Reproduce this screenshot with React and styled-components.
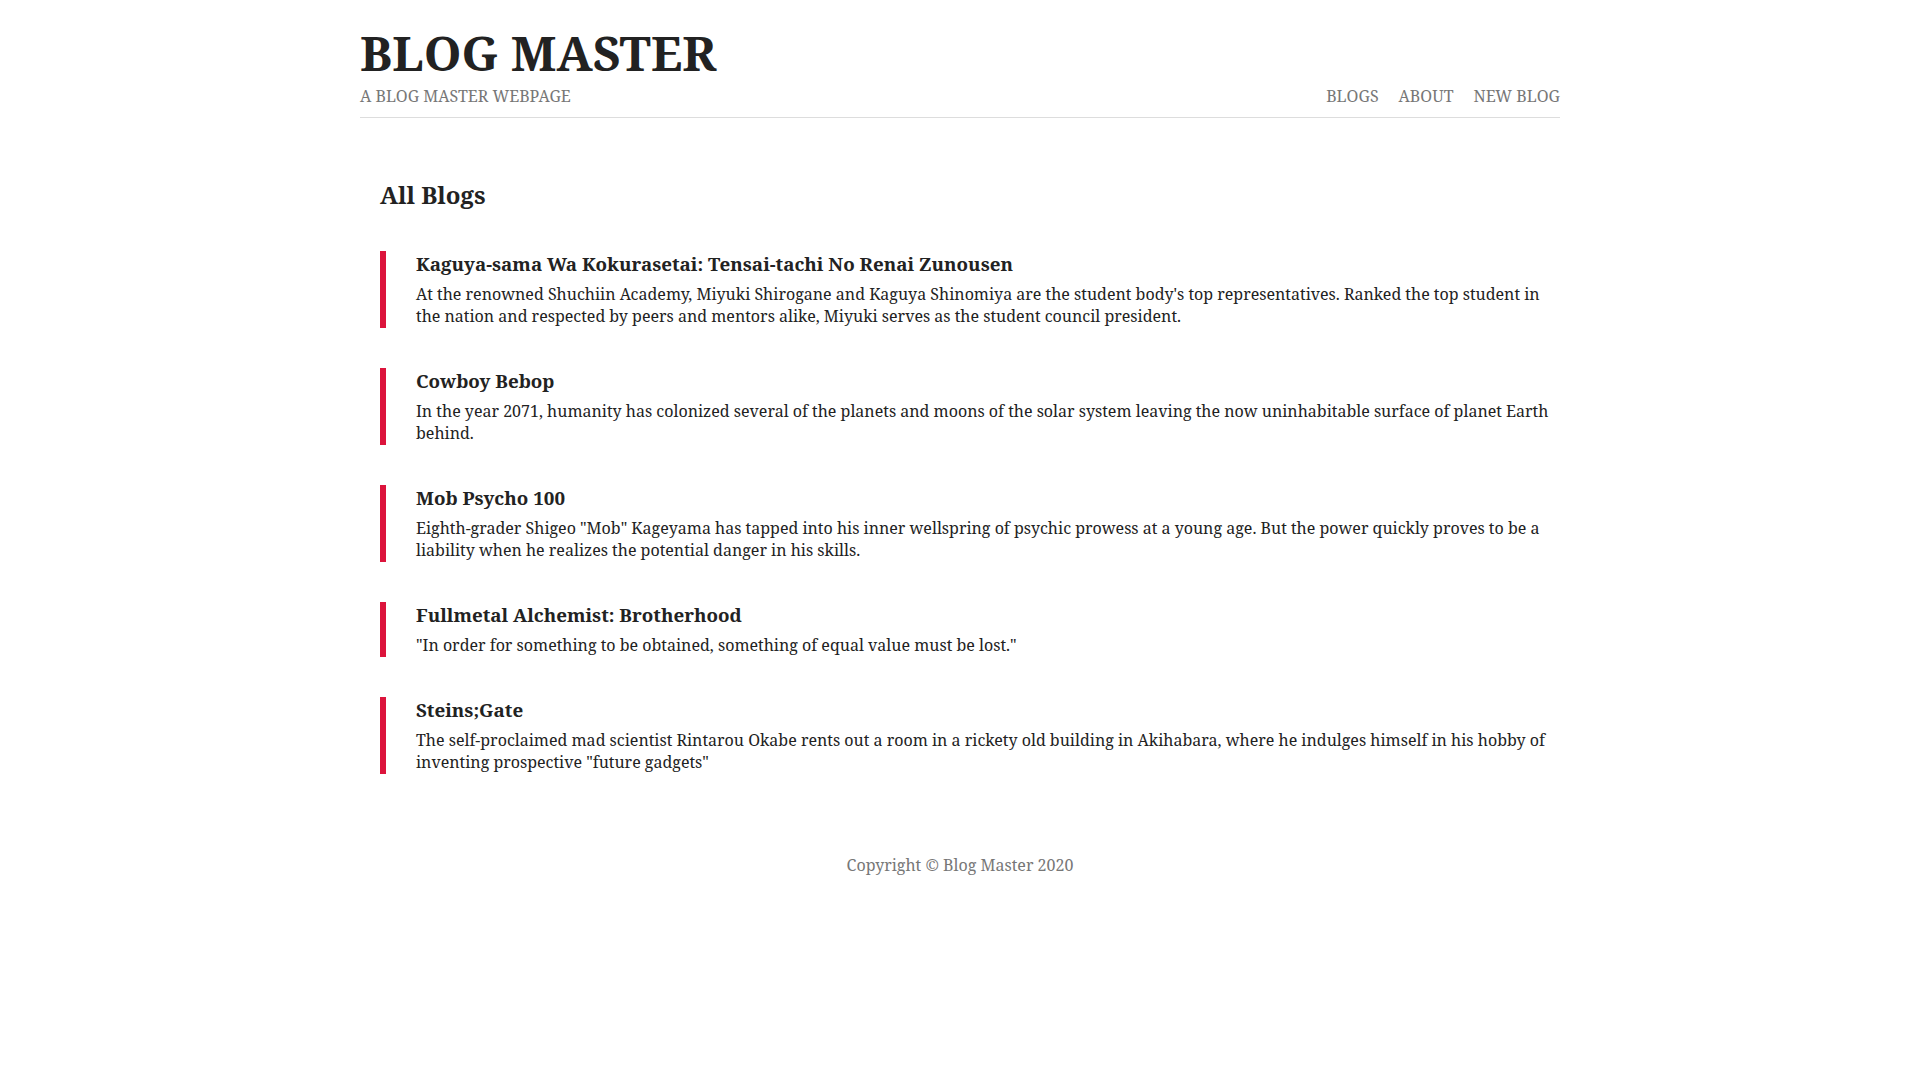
import styled, { createGlobalStyle } from "styled-components";

const GlobalStyle = createGlobalStyle`
  html, body {
    margin: 0;
    padding: 0;
    background: #fff;
  }
  body {
    font-family: "Noto Serif", "DejaVu Serif", "Liberation Serif", serif;
    color: #222;
  }
`;

const blogs = [
  {
    title: "Kaguya-sama Wa Kokurasetai: Tensai-tachi No Renai Zunousen",
    body: "At the renowned Shuchiin Academy, Miyuki Shirogane and Kaguya Shinomiya are the student body's top representatives. Ranked the top student in the nation and respected by peers and mentors alike, Miyuki serves as the student council president.",
  },
  {
    title: "Cowboy Bebop",
    body: "In the year 2071, humanity has colonized several of the planets and moons of the solar system leaving the now uninhabitable surface of planet Earth behind.",
  },
  {
    title: "Mob Psycho 100",
    body: 'Eighth-grader Shigeo "Mob" Kageyama has tapped into his inner wellspring of psychic prowess at a young age. But the power quickly proves to be a liability when he realizes the potential danger in his skills.',
  },
  {
    title: "Fullmetal Alchemist: Brotherhood",
    body: '"In order for something to be obtained, something of equal value must be lost."',
  },
  {
    title: "Steins;Gate",
    body: 'The self-proclaimed mad scientist Rintarou Okabe rents out a room in a rickety old building in Akihabara, where he indulges himself in his hobby of inventing prospective "future gadgets"',
  },
];

const Page = styled.div`
  width: 1200px;
  margin: 0 auto;
`;

const Header = styled.header`
  display: flex;
  justify-content: space-between;
  align-items: flex-end;
  padding-top: 24px;
  padding-bottom: 10px;
  border-bottom: 1px solid #ddd;
`;

const Brand = styled.div`
  display: flex;
  flex-direction: column;
  gap: 3px;
`;

const Title = styled.h1`
  margin: 0;
  font-size: 48px;
  line-height: 1.2;
  font-weight: 700;
  color: #222;
`;

const Tagline = styled.div`
  font-size: 16px;
  line-height: 1.4;
  color: #777;
  text-transform: uppercase;
`;

const Nav = styled.nav`
  display: flex;
  gap: 20px;
`;

const NavLink = styled.a`
  font-size: 16px;
  line-height: 1.4;
  color: #777;
  text-decoration: none;
  text-transform: uppercase;
  cursor: pointer;
`;

const Main = styled.main`
  padding: 60px 0 0 20px;
`;

const Heading = styled.h2`
  margin: 0 0 39px;
  font-size: 24px;
  line-height: 1.4;
  font-weight: 700;
`;

const List = styled.div`
  display: flex;
  flex-direction: column;
  gap: 40px;
`;

const Post = styled.article`
  border-left: 6px solid #dc143c;
  padding-left: 30px;
`;

const PostTitle = styled.h3`
  margin: 0 0 6px;
  font-size: 18.8px;
  line-height: 1.4;
  font-weight: 700;
`;

const PostBody = styled.p`
  margin: 0;
  font-size: 16px;
  line-height: 1.4;
`;

const Footer = styled.footer`
  padding: 80px 0 40px;
  text-align: center;
  font-size: 16px;
  line-height: 1.4;
  color: #777;
`;

export default function App() {
  return (
    <>
      <GlobalStyle />
      <Page>
        <Header>
          <Brand>
            <Title>BLOG MASTER</Title>
            <Tagline>A Blog Master Webpage</Tagline>
          </Brand>
          <Nav>
            <NavLink>Blogs</NavLink>
            <NavLink>About</NavLink>
            <NavLink>New Blog</NavLink>
          </Nav>
        </Header>
        <Main>
          <Heading>All Blogs</Heading>
          <List>
            {blogs.map((b) => (
              <Post key={b.title}>
                <PostTitle>{b.title}</PostTitle>
                <PostBody>{b.body}</PostBody>
              </Post>
            ))}
          </List>
        </Main>
        <Footer>Copyright © Blog Master 2020</Footer>
      </Page>
    </>
  );
}
